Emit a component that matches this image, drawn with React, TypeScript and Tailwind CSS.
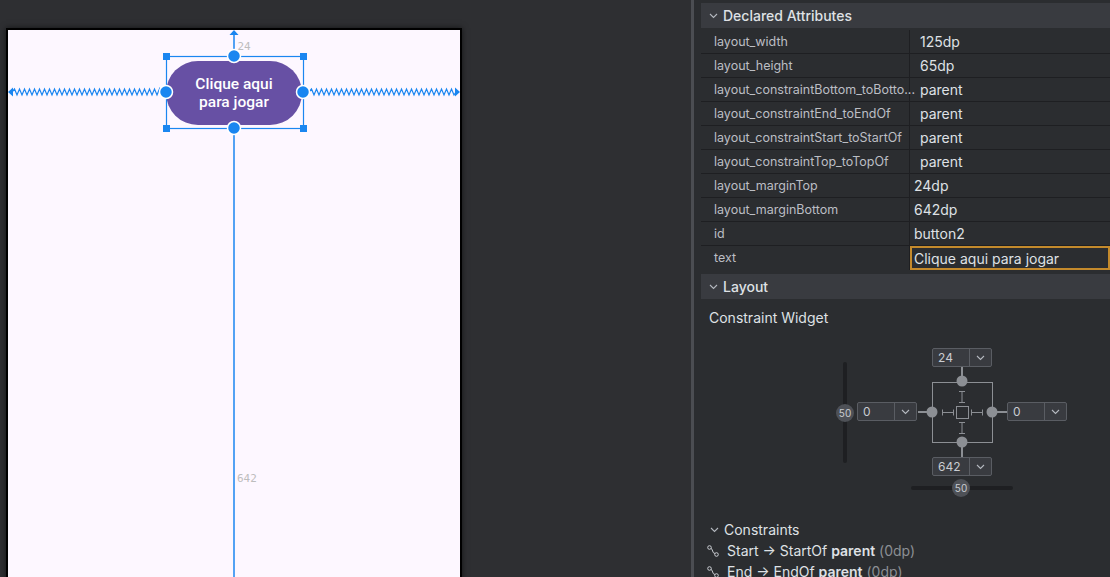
import { ReactNode } from "react";

const attributes = [
  { name: "layout_width", value: "125dp", pad: "pl-[10px]" },
  { name: "layout_height", value: "65dp", pad: "pl-[10px]" },
  { name: "layout_constraintBottom_toBotto...", value: "parent", pad: "pl-[10px]" },
  { name: "layout_constraintEnd_toEndOf", value: "parent", pad: "pl-[10px]" },
  { name: "layout_constraintStart_toStartOf", value: "parent", pad: "pl-[10px]" },
  { name: "layout_constraintTop_toTopOf", value: "parent", pad: "pl-[10px]" },
  { name: "layout_marginTop", value: "24dp", pad: "pl-[4px]" },
  { name: "layout_marginBottom", value: "642dp", pad: "pl-[4px]" },
  { name: "id", value: "button2", pad: "pl-[4px]" },
];

function zigzag(x1: number, x2: number, y: number) {
  let d = `M${x1} ${y}`;
  let up = true;
  for (let x = x1 + 2.5; x <= x2; x += 2.5) {
    d += ` L${x} ${up ? y - 3 : y + 3}`;
    up = !up;
  }
  d += ` L${x2} ${y}`;
  return d;
}

function Chevron() {
  return (
    <svg width="9" height="9" viewBox="0 0 9 9" className="shrink-0">
      <path d="M1 3l3.5 3.5L8 3" fill="none" stroke="#b4b8bf" strokeWidth="1.1" />
    </svg>
  );
}

function SectionHeader({ children }: { children: ReactNode }) {
  return (
    <div className="flex h-[25px] items-center gap-[5px] bg-[#393b40] pl-[8px] text-[14px] font-medium text-[#dfe1e5]">
      <Chevron />
      {children}
    </div>
  );
}

function Dropdown({ value, className }: { value: string; className: string }) {
  return (
    <div
      className={`absolute flex h-[19px] w-[60px] overflow-hidden rounded-[2px] border border-[#5a5d63] bg-[#393b40] text-[12px] text-[#c9ccd1] ${className}`}
    >
      <div className="flex w-[36px] items-center pl-[5px]">{value}</div>
      <div className="flex flex-1 items-center justify-center border-l border-[#5a5d63]">
        <Chevron />
      </div>
    </div>
  );
}

function ConstraintWidget() {
  // coordinates relative to the widget box (panel x 694, y 340)
  return (
    <div className="relative h-[160px]">
      <svg className="absolute inset-0" width="416" height="160" viewBox="0 0 416 160">
        {/* sliders */}
        <rect x="149" y="22" width="4" height="101" rx="2" fill="#1e1f22" />
        <rect x="217" y="146" width="102" height="4" rx="2" fill="#1e1f22" />
        {/* box */}
        <rect x="238.5" y="42.5" width="60" height="60" fill="none" stroke="#8c8f94" />
        <line x1="268" y1="27" x2="268" y2="38" stroke="#8c8f94" strokeWidth="2" />
        <line x1="268" y1="107" x2="268" y2="118" stroke="#8c8f94" strokeWidth="2" />
        <line x1="224" y1="72" x2="234" y2="72" stroke="#8c8f94" strokeWidth="2" />
        <line x1="303" y1="72" x2="313" y2="72" stroke="#8c8f94" strokeWidth="2" />
        <circle cx="268" cy="41" r="5.5" fill="#8c8f94" />
        <circle cx="268" cy="102" r="5.5" fill="#8c8f94" />
        <circle cx="238" cy="72" r="5.5" fill="#8c8f94" />
        <circle cx="298" cy="72" r="5.5" fill="#8c8f94" />
        <rect x="262.5" y="66.5" width="12" height="12" fill="none" stroke="#8c8f94" />
        <g stroke="#8c8f94" strokeWidth="1" fill="none">
          <path d="M268 51v12M265 51.5h6M265 62.5h6" />
          <path d="M268 82v12M265 82.5h6M265 93.5h6" />
          <path d="M248 72.5h12M248.5 69.5v6M259.5 69.5v6" />
          <path d="M277 72.5h12M277.5 69.5v6M288.5 69.5v6" />
        </g>
        {/* knobs */}
        <circle cx="151" cy="73" r="9" fill="#4e5157" />
        <text x="151" y="76.5" textAnchor="middle" fontSize="10" fill="#c9ccd1" fontFamily="Inter, sans-serif">
          50
        </text>
        <circle cx="267" cy="148" r="9" fill="#4e5157" />
        <text x="267" y="151.5" textAnchor="middle" fontSize="10" fill="#c9ccd1" fontFamily="Inter, sans-serif">
          50
        </text>
      </svg>
      <Dropdown value="24" className="left-[238px] top-[8px]" />
      <Dropdown value="0" className="left-[163px] top-[62px]" />
      <Dropdown value="0" className="left-[313px] top-[62px]" />
      <Dropdown value="642" className="left-[238px] top-[117px]" />
    </div>
  );
}

function LinkIcon() {
  return (
    <svg width="12" height="12" viewBox="0 0 12 12" className="shrink-0">
      <circle cx="2.5" cy="2.5" r="1.8" fill="none" stroke="#c9ccd1" strokeWidth="1" />
      <circle cx="9.5" cy="9.5" r="1.8" fill="none" stroke="#c9ccd1" strokeWidth="1" />
      <path d="M4 3.5c2 0 1 5 4 5" fill="none" stroke="#c9ccd1" strokeWidth="1" />
    </svg>
  );
}

function Phone() {
  const blue = "#1a86f0";
  return (
    <div className="relative mt-[28px] ml-[6px] h-[560px] w-[456px] border-2 border-black bg-[#fdf7ff] shadow-[0_0_6px_rgba(0,0,0,0.6)]">
      <div className="flex justify-center pt-[31px]">
        <button className="flex h-[64px] w-[136px] items-center justify-center rounded-full bg-[#6750a4] text-center font-['Roboto'] text-[15.5px] leading-[18px] font-medium text-white">
          Clique aqui
          <br />
          para jogar
        </button>
      </div>
      <svg className="absolute inset-0 overflow-visible" width="452" height="547" viewBox="0 0 452 547">
        <path d={zigzag(4, 152, 62)} fill="none" stroke={blue} strokeWidth="1.2" />
        <path d={zigzag(301, 448, 62)} fill="none" stroke={blue} strokeWidth="1.2" />
        <path d="M0 62l5 -4.5v9z" fill={blue} />
        <path d="M452 62l-5 -4.5v9z" fill={blue} />
        <line x1="226" y1="3" x2="226" y2="26" stroke={blue} strokeWidth="1.5" />
        <path d="M226 0l-4.5 5h9z" fill={blue} />
        <line x1="226" y1="98" x2="226" y2="547" stroke={blue} strokeWidth="1.5" />
        <text x="229.5" y="20" fontSize="11" fill="#bdbdbd" fontFamily="'DejaVu Sans Mono', monospace">
          24
        </text>
        <text x="229" y="452" fontSize="11" fill="#bdbdbd" fontFamily="'DejaVu Sans Mono', monospace">
          642
        </text>
        <rect x="158.5" y="26.5" width="137" height="72" fill="none" stroke={blue} strokeWidth="1.2" />
        {[
          [158.5, 26.5],
          [295.5, 26.5],
          [158.5, 98.5],
          [295.5, 98.5],
        ].map(([x, y]) => (
          <rect key={`${x}-${y}`} x={x - 3.5} y={y - 3.5} width="7" height="7" fill={blue} />
        ))}
        {[
          [226, 26],
          [226, 98],
          [158, 62],
          [295, 62],
        ].map(([x, y]) => (
          <circle key={`${x}-${y}`} cx={x} cy={y} r="6.5" fill={blue} stroke="#ffffff" strokeWidth="1.5" />
        ))}
      </svg>
    </div>
  );
}

export default function App() {
  return (
    <div className="flex h-[577px] w-[1110px] overflow-hidden bg-[#2e2f32] font-['Inter',sans-serif]">
      <div className="w-[691px] shrink-0">
        <Phone />
      </div>
      <div className="w-[3px] shrink-0 bg-[#4b4d52]" />
      <div className="flex-1 bg-[#2b2d30] pt-[3px] pl-[7px]">
        <SectionHeader>Declared Attributes</SectionHeader>
        <div className="mt-[2px]">
          {attributes.map((a) => (
            <div key={a.name} className="flex h-[24px] border-b border-[#1e1f22] text-[12.5px]">
              <div className="flex w-[209px] items-center border-r border-[#1e1f22] pt-[1px] pl-[13px] text-[#bcbec4]">
                {a.name}
              </div>
              <div className={`flex flex-1 items-center text-[14px] text-[#dfe1e5] ${a.pad}`}>{a.value}</div>
            </div>
          ))}
          <div className="flex h-[24px] text-[12.5px]">
            <div className="flex w-[209px] items-center border-r border-[#1e1f22] pt-[1px] pl-[13px] text-[#bcbec4]">
              text
            </div>
            <div className="flex flex-1 items-center border-2 border-[#c48a2c] pl-[2px] text-[14px] text-[#dfe1e5]">
              Clique aqui para jogar
            </div>
          </div>
        </div>
        <div className="mt-[4px]">
          <SectionHeader>Layout</SectionHeader>
        </div>
        <div className="mt-[8px] pl-[8px] text-[14px] text-[#dfe1e5]">Constraint Widget</div>
        <div className="-ml-[7px] mt-[12px]">
          <ConstraintWidget />
        </div>
        <div className="mt-[19px] flex items-center gap-[5px] pl-[9px] text-[14px] text-[#dfe1e5]">
          <Chevron />
          Constraints
        </div>
        <div className="flex flex-col pl-[6px] text-[14px] leading-[21px] text-[#dfe1e5]">
          <div className="flex items-center gap-[8px]">
            <LinkIcon />
            <span>
              Start → StartOf <span className="font-semibold">parent</span>{" "}
              <span className="text-[#8c8f94]">(0dp)</span>
            </span>
          </div>
          <div className="flex items-center gap-[8px]">
            <LinkIcon />
            <span>
              End → EndOf <span className="font-semibold">parent</span>{" "}
              <span className="text-[#8c8f94]">(0dp)</span>
            </span>
          </div>
        </div>
      </div>
    </div>
  );
}
